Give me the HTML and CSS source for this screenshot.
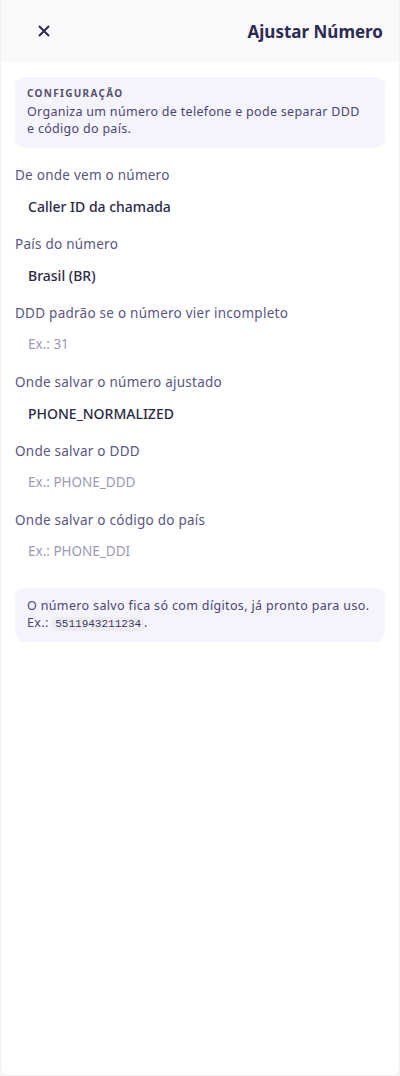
FILE: index.html
```html
<!DOCTYPE html>
<html lang="pt-BR">
<head>
    <meta charset="UTF-8">
    <meta name="viewport" content="width=device-width, initial-scale=1.0">
    <title>Ajustar Número</title>
    <link rel="stylesheet" href="styles.css">
</head>
<body>

    <div class="sheet">
        <!-- Header -->
        <div class="sheet-header">
            <button class="close-btn" aria-label="Fechar">
                <svg width="14" height="14" viewBox="0 0 14 14">
                    <path d="M2.5 2.5 L11.5 11.5 M11.5 2.5 L2.5 11.5" stroke="#2d2b52" stroke-width="2" stroke-linecap="round"/>
                </svg>
            </button>
            <h1>Ajustar Número</h1>
        </div>

        <div class="sheet-body">
            <!-- Info card -->
            <div class="info-card">
                <div class="info-title">Configuração</div>
                <p>Organiza um número de telefone e pode separar DDD e código do país.</p>
            </div>

            <div class="field">
                <label>De onde vem o número</label>
                <div class="input">Caller ID da chamada</div>
            </div>

            <div class="field">
                <label>País do número</label>
                <div class="input">Brasil (BR)</div>
            </div>

            <div class="field">
                <label>DDD padrão se o número vier incompleto</label>
                <div class="input placeholder">Ex.: 31</div>
            </div>

            <div class="field">
                <label>Onde salvar o número ajustado</label>
                <div class="input">PHONE_NORMALIZED</div>
            </div>

            <div class="field">
                <label>Onde salvar o DDD</label>
                <div class="input placeholder">Ex.: PHONE_DDD</div>
            </div>

            <div class="field">
                <label>Onde salvar o código do país</label>
                <div class="input placeholder">Ex.: PHONE_DDI</div>
            </div>

            <!-- Hint -->
            <div class="hint-card">
                O número salvo fica só com dígitos, já pronto para uso.<br>
                Ex.: <code>5511943211234</code>.
            </div>
        </div>
    </div>

</body>
</html>
```

FILE: styles.css
```css
/* Basic styles */
body {
    margin: 0;
    padding: 0;
    background-color: #f4f4f6;
    font-family: 'Noto Sans', 'Open Sans', sans-serif;
    color: #2b2946;
}

.sheet {
    width: 400px;
    height: 1076px;
    box-sizing: border-box;
    background-color: #ffffff;
    border: 1px solid #f1f1f4;
    border-top: none;
    border-radius: 0 0 8px 8px;
    overflow: hidden;
}

/* Header */
.sheet-header {
    height: 62px;
    margin: 0 -1px;
    background-color: #f9f9fb;
    display: flex;
    align-items: center;
    justify-content: space-between;
    padding: 0 17px 0 30px;
}

.close-btn {
    width: 28px;
    height: 28px;
    border: none;
    background: none;
    padding: 0;
    display: flex;
    align-items: center;
    justify-content: center;
    cursor: pointer;
}

.sheet-header h1 {
    margin: 0;
    font-size: 17px;
    font-weight: 700;
    color: #2d2b52;
}

/* Body */
.sheet-body {
    padding: 15px 14px;
}

.info-card {
    background-color: #f5f3fb;
    border-radius: 10px;
    padding: 9px 20px 11px 12px;
    margin-bottom: 17px;
}

.info-title {
    font-size: 10px;
    font-weight: 700;
    letter-spacing: 1.3px;
    text-transform: uppercase;
    color: #56516f;
    line-height: 14px;
    margin-bottom: 3px;
}

.info-card p {
    margin: 0;
    font-size: 12.5px;
    line-height: 17px;
    letter-spacing: 0.3px;
    color: #4b4672;
}

/* Fields */
.field {
    margin-bottom: 9px;
}

.field label {
    display: block;
    font-size: 13.5px;
    line-height: 20px;
    letter-spacing: 0.25px;
    color: #5a5680;
    margin-bottom: 2px;
}

.input {
    height: 38px;
    display: flex;
    align-items: center;
    padding: 0 13px;
    font-size: 14px;
    font-weight: 500;
    color: #2b2946;
}

.input.placeholder {
    font-size: 13.5px;
    font-weight: 400;
    color: #9c9ab0;
}

/* Hint */
.hint-card {
    margin-top: 18px;
    background-color: #f5f3fb;
    border-radius: 10px;
    padding: 9px 12px;
    font-size: 12.5px;
    line-height: 17px;
    letter-spacing: 0.35px;
    color: #4b4672;
}

.hint-card code {
    font-family: 'Liberation Mono', monospace;
    font-size: 11px;
    letter-spacing: 0;
    background-color: #eeecf3;
    color: #3d3860;
    padding: 1px 3px;
    border-radius: 3px;
}
```
